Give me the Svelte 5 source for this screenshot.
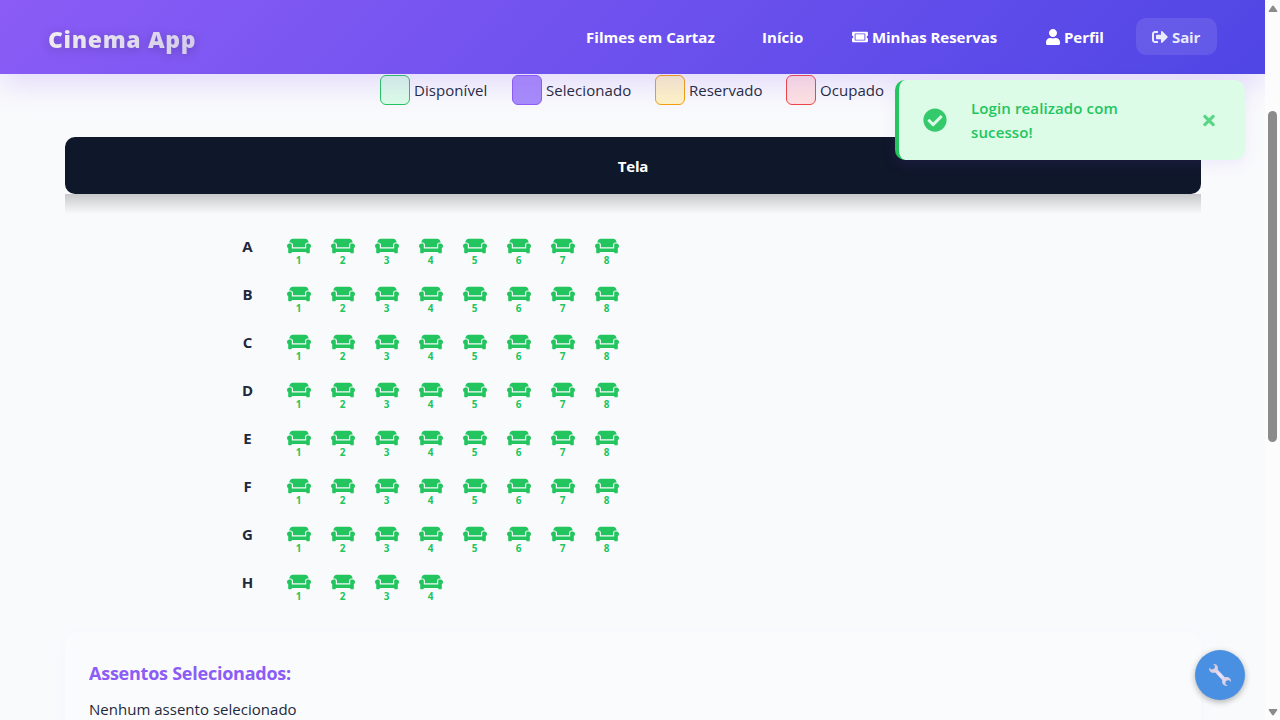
<script>
  const COUCH = 'M160 224v64h320v-64c0-35.3 28.7-64 64-64h32c0-53-43-96-96-96H160c-53 0-96 43-96 96h32c35.3 0 64 28.7 64 64zm416-32h-32c-17.7 0-32 14.3-32 32v96H128v-96c0-17.7-14.3-32-32-32H64c-35.3 0-64 28.7-64 64 0 23.6 13 44 32 55.1V432c0 8.8 7.2 16 16 16h64c8.8 0 16-7.2 16-16v-16h384v16c0 8.8 7.2 16 16 16h64c8.8 0 16-7.2 16-16V311.1c19-11.1 32-31.5 32-55.1 0-35.3-28.7-64-64-64z';
  const rows = ['A', 'B', 'C', 'D', 'E', 'F', 'G', 'H'].map((name) => ({
    name,
    seats: Array.from({ length: name === 'H' ? 4 : 8 }, (_, i) => i + 1)
  }));
  const legend = [
    { label: 'Disponível', kind: 'free' },
    { label: 'Selecionado', kind: 'selected' },
    { label: 'Reservado', kind: 'reserved' },
    { label: 'Ocupado', kind: 'taken' }
  ];
</script>

<div class="page">
  <div class="view">
    <header>
      <div class="logo">Cinema App</div>
      <nav>
        <a class="films"><span>Filmes em Cartaz</span></a>
        <a class="home"><span>Início</span></a>
        <a class="bookings">
          <svg viewBox="0 0 576 512"><path d="M128 160h320v192H128V160zm400 96c0 26.51 21.49 48 48 48v96c0 26.51-21.49 48-48 48H48c-26.51 0-48-21.49-48-48v-96c26.51 0 48-21.49 48-48s-21.49-48-48-48v-96c0-26.51 21.49-48 48-48h480c26.51 0 48 21.49 48 48v96c-26.51 0-48 21.49-48 48zm-48-104c0-13.255-10.745-24-24-24H120c-13.255 0-24 10.745-24 24v208c0 13.255 10.745 24 24 24h336c13.255 0 24-10.745 24-24V152z" /></svg>
          <span>Minhas Reservas</span>
        </a>
        <a class="profile">
          <svg viewBox="0 0 448 512"><path d="M224 256c70.7 0 128-57.3 128-128S294.7 0 224 0 96 57.3 96 128s57.3 128 128 128zm89.6 32h-16.7c-22.2 10.2-46.9 16-72.9 16s-50.6-5.8-72.9-16h-16.7C60.2 288 0 348.2 0 422.4V464c0 26.5 21.5 48 48 48h352c26.5 0 48-21.5 48-48v-41.6c0-74.2-60.2-134.4-134.4-134.4z" /></svg>
          <span>Perfil</span>
        </a>
        <button class="logout">
          <svg viewBox="0 0 512 512"><path d="M497 273L329 441c-15 15-41 4.5-41-17v-96H152c-13.3 0-24-10.7-24-24v-96c0-13.3 10.7-24 24-24h136V88c0-21.4 25.9-32 41-17l168 168c9.3 9.4 9.3 24.6 0 34zM192 436v-40c0-6.6-5.4-12-12-12H96c-17.7 0-32-14.3-32-32V160c0-17.7 14.3-32 32-32h84c6.6 0 12-5.4 12-12V76c0-6.6-5.4-12-12-12H96c-53 0-96 43-96 96v192c0 53 43 96 96 96h84c6.6 0 12-5.4 12-12z" /></svg>
          <span>Sair</span>
        </button>
      </nav>
    </header>

    <main>
      <div class="legend">
        {#each legend as item}
          <div class="item {item.kind}"><i></i><span>{item.label}</span></div>
        {/each}
      </div>

      <div class="screen"><span>Tela</span></div>
      <div class="glow"></div>

      <div class="rows">
        {#each rows as row}
          <div class="row">
            <b>{row.name}</b>
            {#each row.seats as seat}
              <div class="seat">
                <svg viewBox="0 0 640 512"><path d={COUCH} /></svg>
                <small>{seat}</small>
              </div>
            {/each}
          </div>
        {/each}
      </div>

      <section class="summary">
        <h3>Assentos Selecionados:</h3>
        <p>Nenhum assento selecionado</p>
      </section>
    </main>
  </div>

  <div class="scrollbar">
    <svg class="up" viewBox="0 0 10 8"><path d="M4 1.200Q5-.2 6 1.200L9.300 6Q9.600 7 8.500 7H1.500Q.4 7 .7 6z" /></svg>
    <div class="thumb"></div>
    <svg class="down" viewBox="0 0 10 8"><path d="M4 6.800Q5 8.200 6 6.800L9.300 2Q9.600 1 8.500 1H1.500Q.4 1 .7 2z" /></svg>
  </div>

  <div class="toast">
    <svg class="check" viewBox="0 0 512 512"><path d="M504 256c0 136.967-111.033 248-248 248S8 392.967 8 256 119.033 8 256 8s248 111.033 248 248zM227.314 387.314l184-184c6.248-6.248 6.248-16.379 0-22.627l-22.627-22.627c-6.248-6.249-16.379-6.249-22.628 0L216 308.118l-70.059-70.059c-6.248-6.248-16.379-6.248-22.628 0l-22.627 22.627c-6.248 6.248-6.248 16.379 0 22.627l104 104c6.249 6.249 16.379 6.249 22.628.001z" /></svg>
    <p>Login realizado com<br />sucesso!</p>
    <svg class="close" viewBox="0 0 352 512"><path d="M242.72 256l100.07-100.07c12.28-12.28 12.28-32.19 0-44.48l-22.24-22.24c-12.28-12.28-32.19-12.28-44.48 0L176 189.28 75.93 89.21c-12.28-12.28-32.19-12.28-44.48 0L9.21 111.45c-12.28 12.28-12.28 32.19 0 44.48L109.28 256 9.21 356.07c-12.28 12.28-12.28 32.19 0 44.48l22.24 22.24c12.28 12.28 32.2 12.28 44.48 0L176 322.72l100.07 100.07c12.28 12.28 32.2 12.28 44.48 0l22.24-22.24c12.28-12.28 12.28-32.19 0-44.48L242.72 256z" /></svg>
  </div>

  <div class="tools">
    <svg viewBox="0 0 24 24">
      <defs>
        <linearGradient id="steel" x1="0" y1="0" x2="1" y2="1">
          <stop offset="0" stop-color="#c9c0cf" />
          <stop offset=".5" stop-color="#eee0f8" />
          <stop offset="1" stop-color="#cdc4d2" />
        </linearGradient>
      </defs>
      <path fill="url(#steel)" d="M5.200 1.100C7.800.7 9.900 2.500 9.900 4.800c0 .7-.1 1.200-.3 1.700l7.400 7.900c2.300-.8 4.900.1 5.800 2.500.2.600.3 1.300.2 1.900l-2.400-1.700-2.800 1-.4 2.800 2.400 1.800c-2.800.9-5.500-.8-5.700-3.600 0-.7.1-1.300.3-1.800L7.200 9.500C4.700 10.500 2.100 9.200 1.300 6.900 1.100 6.200 1 5.500 1.200 4.800l2.500 1.800 2.700-1 .5-2.700z" />
    </svg>
  </div>
</div>

<style>
  :global(body) { margin: 0; overflow: hidden; }
  .page {
    position: relative;
    display: flex;
    width: 1280px;
    height: 720px;
    overflow: hidden;
    background: #f9fafc;
    color: #1e293b;
    font: 15px/24px "Open Sans", "Noto Sans", sans-serif;
  }
  .page * { box-sizing: border-box; }
  span, p, h3, .logo { white-space: nowrap; }
  .view { width: 1265px; height: 720px; overflow: hidden; }
  svg { display: block; fill: currentColor; flex: none; }

  header {
    position: relative;
    z-index: 2;
    display: flex;
    align-items: center;
    justify-content: space-between;
    height: 74px;
    padding: 0 48px 1px;
    color: #fff;
    background: linear-gradient(135deg, #8b5cf6, #4f46e5);
    box-shadow: 0 10px 30px rgba(139, 92, 246, .2);
  }
  .logo {
    font-size: 23px;
    line-height: 36px;
    font-weight: 800;
    letter-spacing: .65px;
    padding-top: 4px;
    color: transparent;
    background: linear-gradient(135deg, #f2f0f2, #d2cae9);
    background-clip: text;
    filter: drop-shadow(0 2px 5px rgba(0, 0, 0, .2));
  }
  nav { display: flex; align-items: center; font-weight: 700; }
  nav a { display: flex; align-items: center; gap: 4px; height: 37px; }
  nav svg { width: 16px; height: 16px; }
  .films { width: 176px; letter-spacing: .04px; }
  .home { width: 90px; letter-spacing: .04px; }
  .bookings { width: 193px; letter-spacing: -.05px; }
  .profile { width: 91px; gap: 3px; letter-spacing: -.05px; }
  .logout {
    display: flex;
    align-items: center;
    gap: 4px;
    width: 81px;
    height: 37px;
    padding: 0 16px;
    border: 0;
    border-radius: 10px;
    color: rgba(255, 255, 255, .88);
    background: rgba(255, 255, 255, .1);
    font: inherit;
    letter-spacing: -.1px;
  }

  main { padding: 1px 64px 0 65px; }
  .legend { display: flex; height: 30px; padding-left: 315px; }
  .item { display: flex; align-items: center; gap: 4px; letter-spacing: .06px; }
  .item i { width: 30px; height: 30px; border: 1px solid; border-radius: 6px; }
  .free { width: 132px; }
  .selected { width: 143px; }
  .reserved { width: 131px; letter-spacing: 0; }
  .free i { background: #dcfce7; border-color: #22c55e; }
  .selected i { background: #a78bfa; border-color: #8b5cf6; }
  .reserved i { background: #fef3c7; border-color: #f59e0b; }
  .taken i { background: #fee2e2; border-color: #ef4444; }
  .screen {
    display: flex;
    align-items: center;
    justify-content: center;
    height: 57px;
    margin-top: 32px;
    padding-top: 1px;
    border-radius: 10px;
    background: #0f172a;
    color: #fff;
    font-weight: 700;
    letter-spacing: -.2px;
  }
  .glow { height: 20px; background: linear-gradient(rgba(0, 0, 0, .2), transparent); }

  .rows { display: flex; flex-direction: column; gap: 8px; padding: 14px 0 0 168px; }
  .row { display: flex; align-items: center; gap: 4px; height: 40px; }
  .row b { width: 29px; margin-right: 16px; text-align: center; padding-bottom: 4px; }
  .row .seat:first-of-type { margin-left: -3px; }
  .seat {
    display: flex;
    flex-direction: column;
    align-items: center;
    width: 40px;
    color: #22c55e;
  }
  .seat svg { width: 24px; height: 24px; margin-top: 3px; }
  .seat small { font-size: 10px; line-height: 10px; margin: -3px 1px 0 0; font-weight: 700; }

  .summary {
    height: 180px;
    margin-top: 28px;
    padding: 27px 24px;
    border-radius: 12px;
    background: #fafbfc;
    box-shadow: 0 4px 20px rgba(139, 92, 246, .02);
  }
  h3 { margin: 0 0 10px; font-size: 18px; line-height: 28px; letter-spacing: -.24px; color: #8b5cf6; }
  .summary p { margin: 0; letter-spacing: .02px; }

  .scrollbar {
    display: flex;
    flex-direction: column;
    align-items: center;
    width: 15px;
    background: #fcfcfc;
    color: #8b8b8b;
  }
  .scrollbar svg { width: 10px; height: 8px; }
  .up { margin-top: 5px; }
  .thumb { width: 9px; height: 331px; margin-top: 98px; border-radius: 5px; background: #8b8b8b; }
  .down { margin-top: auto; margin-bottom: 4px; }

  .toast {
    position: absolute;
    z-index: 3;
    left: 895px;
    top: 80px;
    display: flex;
    align-items: center;
    width: 350px;
    height: 80px;
    padding: 0 30px 0 24px;
    border-left: 4px solid #22c55e;
    border-radius: 10px;
    background: #dcfce7;
    color: #22c55e;
    box-shadow: 0 4px 15px rgba(139, 92, 246, .1);
  }
  .check { width: 24px; height: 24px; opacity: .9; }
  .toast p { flex: 1; margin: 0 0 0 24px; font-weight: 600; letter-spacing: .12px; }
  .close { width: 12px; height: 17px; opacity: .7; }

  .tools {
    position: absolute;
    z-index: 3;
    left: 1195px;
    top: 650px;
    display: grid;
    place-items: center;
    width: 50px;
    height: 50px;
    border-radius: 50%;
    background: #4a90e2;
    box-shadow: 0 2px 6px rgba(0, 0, 0, .3);
  }
  .tools svg { width: 24px; height: 24px; }
</style>
